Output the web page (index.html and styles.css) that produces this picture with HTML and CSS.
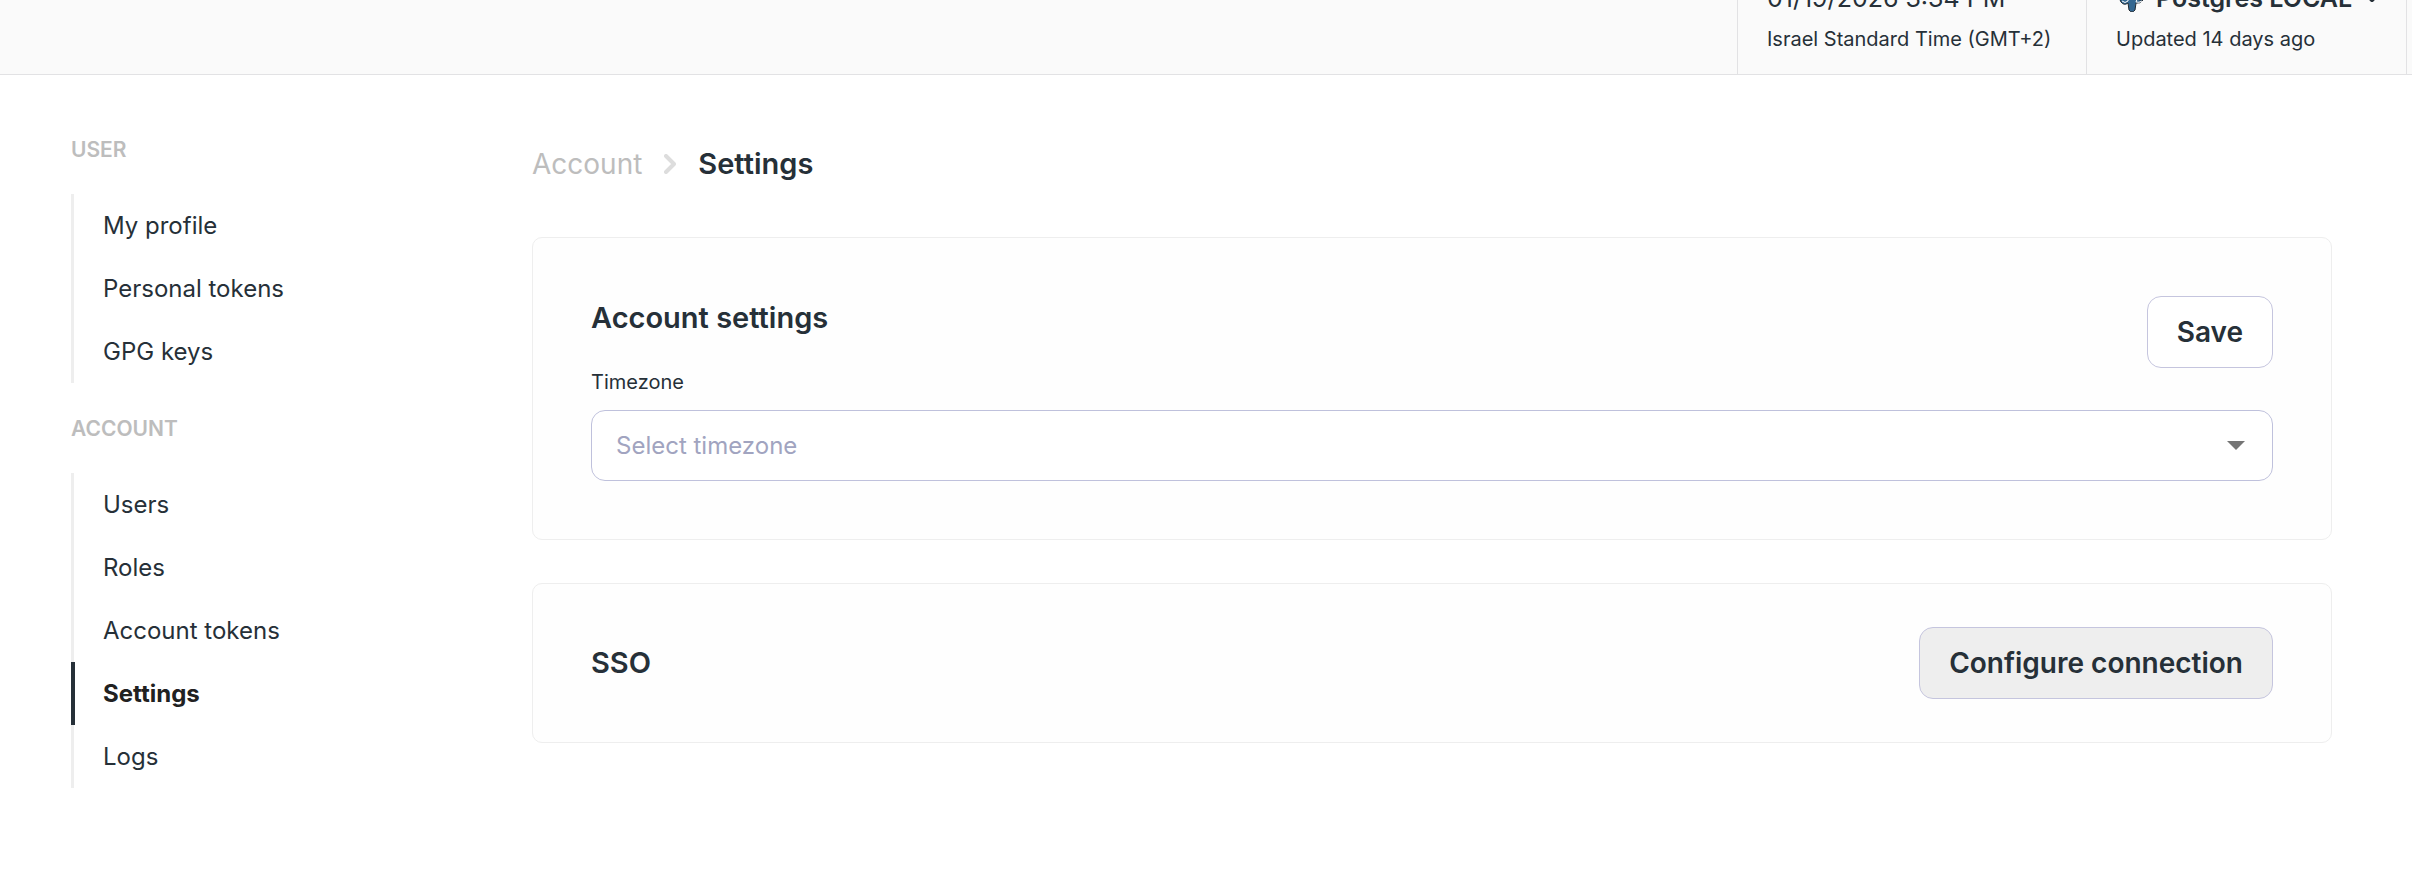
FILE: index.html
```html
<!DOCTYPE html>
<html lang="en">
<head>
<meta charset="utf-8">
<title>Account settings</title>
<link rel="stylesheet" href="styles.css">
</head>
<body>
<header class="topbar">
  <div class="cell cell-time">
    <span class="cell-main">01/19/2026 3:34 PM</span>
    <span class="cell-sub">Israel Standard Time (GMT+2)</span>
  </div>
  <div class="cell cell-source">
    <button class="cell-main source-button" type="button">
      <svg class="elephant" viewBox="0 0 28 28" aria-hidden="true">
        <path d="M2 5Q4 0 11 2Q19-1 25 3Q27 9 23 16L27 16Q24 20 20 19L19 26Q16 30 13 26L12 19Q8 22 5 18Q1 12 2 5Z" fill="#336791" stroke="#222b33" stroke-width="1"/>
        <path d="M6 17Q9 20 12 17L12 14M20 18L22 13M20 18Q23 19 26 17" fill="none" stroke="#fff" stroke-width="1"/>
      </svg>
      <span>Postgres LOCAL</span>
      <svg class="chevron-down" viewBox="0 0 16 10" aria-hidden="true"><path d="M3 2L8 7L13 2" fill="none" stroke="currentColor" stroke-width="4" stroke-linecap="round" stroke-linejoin="round"/></svg>
    </button>
    <span class="cell-sub">Updated 14 days ago</span>
  </div>
  <div class="cell cell-end"></div>
</header>
<div class="layout">
  <nav class="sidebar" aria-label="Settings">
    <h2 class="nav-title">USER</h2>
    <ul class="nav-list">
      <li><a class="nav-link" href="#profile">My profile</a></li>
      <li><a class="nav-link" href="#personal-tokens">Personal tokens</a></li>
      <li><a class="nav-link" href="#gpg">GPG keys</a></li>
    </ul>
    <h2 class="nav-title">ACCOUNT</h2>
    <ul class="nav-list">
      <li><a class="nav-link" href="#users">Users</a></li>
      <li><a class="nav-link" href="#roles">Roles</a></li>
      <li><a class="nav-link" href="#account-tokens">Account tokens</a></li>
      <li><a class="nav-link nav-link-active" href="#settings" aria-current="page">Settings</a></li>
      <li><a class="nav-link" href="#logs">Logs</a></li>
    </ul>
  </nav>
  <main class="content">
    <div class="breadcrumb">
      <a class="crumb" href="#account">Account</a>
      <svg class="chevron-right" viewBox="0 0 12 20" aria-hidden="true"><path d="M2 2L10 10L2 18" fill="none" stroke="#dddddd" stroke-width="4" stroke-linecap="round" stroke-linejoin="round"/></svg>
      <h1 class="crumb-current">Settings</h1>
    </div>
    <section class="card card-account">
      <div class="card-head">
        <h2 class="card-title">Account settings</h2>
        <button class="button" type="button">Save</button>
      </div>
      <label class="field-label" for="timezone">Timezone</label>
      <div class="select-wrap">
        <select class="select" id="timezone">
          <option>Select timezone</option>
        </select>
        <svg class="caret" viewBox="0 0 18 9" aria-hidden="true"><path d="M0 0H18L9 9Z" fill="#757575"/></svg>
      </div>
    </section>
    <section class="card card-sso">
      <h2 class="card-title">SSO</h2>
      <button class="button button-muted" type="button">Configure connection</button>
    </section>
  </main>
</div>
</body>
</html>
```
FILE: styles.css
```css
* { box-sizing: border-box; }

body {
  margin: 0;
  background: #ffffff;
  color: #263038;
  font-family: Inter, "Liberation Sans", sans-serif;
  font-size: 24px;
}

h1, h2, ul { margin: 0; padding: 0; }
ul { list-style: none; }
a { color: inherit; text-decoration: none; }
button, select { font: inherit; color: inherit; }

.topbar {
  display: flex;
  justify-content: flex-end;
  align-items: flex-end;
  height: 75px;
  overflow: hidden;
  background: #fafafa;
  border-bottom: 1px solid #e2e2e4;
}

.cell {
  display: flex;
  flex-direction: column;
  align-items: flex-start;
  gap: 9px;
  height: 112px;
  padding: 20px 28px 19px 29px;
  border-left: 1px solid #e2e2e4;
  white-space: nowrap;
}

.cell-time { width: 349px; }
.cell-source { width: 320px; }
.cell-end { width: 6px; padding: 0; }

.cell-main { font-size: 25px; line-height: 32px; }
.cell-sub { font-size: 20px; line-height: 32px; }

.source-button {
  display: flex;
  align-items: center;
  gap: 12px;
  padding: 0;
  border: 0;
  background: none;
  font-weight: 600;
}

.elephant { width: 28px; height: 28px; }
.chevron-down { width: 16px; height: 10px; }

.layout { display: flex; padding: 0 80px 0 71px; }

.sidebar { flex: none; width: 461px; padding-top: 59px; }

.nav-title {
  font-size: 21px;
  line-height: 32px;
  font-weight: 600;
  color: #bdbdbd;
}

.nav-list { margin: 28px 0 30px; }

.nav-link {
  display: block;
  padding-left: 29px;
  border-left: 3px solid #eeeeee;
  line-height: 63px;
}

.nav-link-active {
  padding-left: 28px;
  border-left: 4px solid #263038;
  color: #212121;
  font-weight: 700;
}

.content { flex: 1; min-width: 0; padding-top: 71px; }

.breadcrumb {
  display: flex;
  align-items: center;
  gap: 22px;
  margin-bottom: 55px;
  font-size: 28px;
  line-height: 36px;
}

.crumb { color: #bdbdbd; }
.crumb-current { font-size: 29px; font-weight: 600; }
.chevron-right { width: 12px; height: 20px; }

.card {
  border: 1px solid #eeeeee;
  border-radius: 10px;
  background: #fefefe;
}

.card-account { padding: 58px; }

.card-head {
  display: flex;
  justify-content: space-between;
  align-items: flex-start;
}

.card-title { font-size: 29px; line-height: 44px; font-weight: 600; }

.button {
  height: 72px;
  padding: 0 29px;
  border: 1px solid #c5c5de;
  border-radius: 14px;
  background: #ffffff;
  font-size: 28px;
  font-weight: 600;
}

.button-muted { background: #eeeeee; }

.field-label { display: block; margin-bottom: 14px; font-size: 20px; line-height: 28px; }

.select-wrap { position: relative; }

.select {
  display: block;
  appearance: none;
  width: 100%;
  height: 71px;
  padding: 0 60px 0 24px;
  border: 1px solid #bfc1dc;
  border-radius: 14px;
  background: #ffffff;
  color: #a1a4c0;
}

.caret {
  position: absolute;
  top: 31px;
  right: 28px;
  width: 18px;
  height: 9px;
  pointer-events: none;
}

.card-sso {
  display: flex;
  justify-content: space-between;
  align-items: center;
  margin-top: 43px;
  padding: 43px 58px;
}
```
